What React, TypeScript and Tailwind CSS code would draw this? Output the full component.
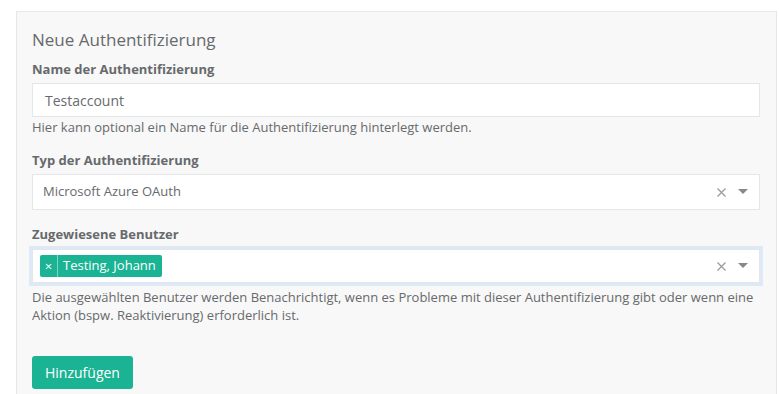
import { ReactNode } from 'react';

function Caret() {
  return (
    <svg width="10" height="6" viewBox="0 0 10 6" className="block">
      <path d="M0 0 L10 0 L5 5 Z" fill="#888888" />
    </svg>
  );
}

function ClearX() {
  return (
    <svg width="9" height="9" viewBox="0 0 9 9" className="block">
      <path d="M0.5 0.5 L8.5 8.5 M8.5 0.5 L0.5 8.5" stroke="#999999" strokeWidth="1.2" />
    </svg>
  );
}

function SelectBox({ children, focused = false }: { children: ReactNode; focused?: boolean }) {
  return (
    <div
      className={
        focused
          ? 'flex items-center h-[34px] bg-white border border-[#e5e6e7] outline-[3px] outline-solid outline-[#dde9f7]'
          : 'flex items-center h-[36px] bg-white border border-[#e5e6e7]'
      }
    >
      <div className="flex-1 flex items-center min-w-0">{children}</div>
      <div className="flex items-center gap-[12px] pr-[11px]">
        <ClearX />
        <Caret />
      </div>
    </div>
  );
}

export default function App() {
  return (
    <div className="min-h-[394px] bg-white pt-[11px] pl-[16px] pr-[2px] font-['Open_Sans',sans-serif] text-[#676a6c]">
      <div className="bg-[#f8f8f8] border border-[#e7e7e7] border-b-0 pl-[15px] pr-[16px] pt-[17px] pb-[20px]">
        <h2 className="text-[17px] leading-[22px] mb-[9px]">Neue Authentifizierung</h2>

        <label className="block text-[13px] leading-[18px] font-bold mb-[5px]">Name der Authentifizierung</label>
        <div className="h-[34px] bg-white border border-[#e5e6e7] flex items-center pl-[12px] text-[14px] text-[#676a6c]">
          Testaccount
        </div>
        <p className="text-[13px] leading-[18px] mt-[1px]">
          Hier kann optional ein Name für die Authentifizierung hinterlegt werden.
        </p>

        <label className="block text-[13px] leading-[18px] font-bold mt-[15px] mb-[5px]">Typ der Authentifizierung</label>
        <SelectBox>
          <span className="pl-[10px] text-[13px]">Microsoft Azure OAuth</span>
        </SelectBox>

        <label className="block text-[13px] leading-[18px] font-bold mt-[15px] mb-[6px]">Zugewiesene Benutzer</label>
        <div className="mt-[3px]">
          <SelectBox focused>
            <div className="ml-[7px] flex items-stretch h-[22px] rounded-[2px] bg-[#1ab394] text-white">
              <span className="w-[18px] flex items-center justify-center text-[13px] leading-none border-r border-[#7fd4c3]">×</span>
              <span className="pl-[5px] pr-[6px] flex items-center text-[13px]">Testing, Johann</span>
            </div>
          </SelectBox>
        </div>
        <p className="text-[13px] leading-[18px] mt-[5px]">
          Die ausgewählten Benutzer werden Benachrichtigt, wenn es Probleme mit dieser Authentifizierung gibt oder wenn eine
          Aktion (bspw. Reaktivierung) erforderlich ist.
        </p>

        <button className="mt-[32px] h-[33px] px-[13px] rounded-[3px] bg-[#1ab394] text-white text-[14px]">
          Hinzufügen
        </button>
      </div>
    </div>
  );
}
